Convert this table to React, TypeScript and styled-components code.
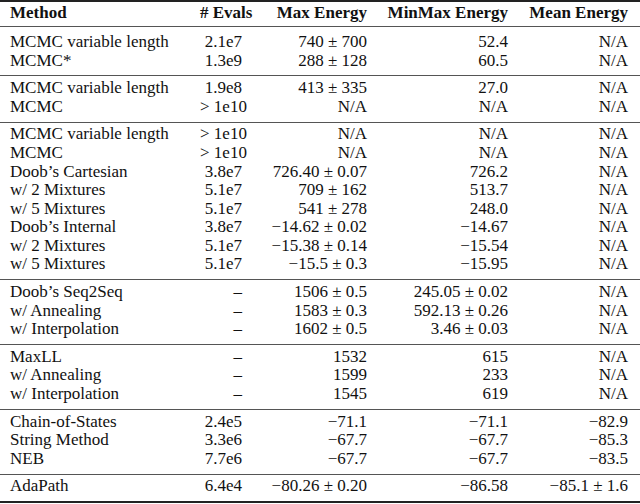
import styled, { createGlobalStyle } from 'styled-components';

const GlobalStyle = createGlobalStyle`
	html, body {
		margin: 0;
		padding: 0;
		background: #ffffff;
	}
`;

// table data, grouped by the rules between them
type Row = [string, string, string, string, string];

const groups: Row[][] = [
	[
		['MCMC variable length', '2.1e7', '740 ± 700', '52.4', 'N/A'],
		['MCMC*', '1.3e9', '288 ± 128', '60.5', 'N/A'],
	],
	[
		['MCMC variable length', '1.9e8', '413 ± 335', '27.0', 'N/A'],
		['MCMC', '> 1e10', 'N/A', 'N/A', 'N/A'],
	],
	[
		['MCMC variable length', '> 1e10', 'N/A', 'N/A', 'N/A'],
		['MCMC', '> 1e10', 'N/A', 'N/A', 'N/A'],
		['Doob’s Cartesian', '3.8e7', '726.40 ± 0.07', '726.2', 'N/A'],
		['w/ 2 Mixtures', '5.1e7', '709 ± 162', '513.7', 'N/A'],
		['w/ 5 Mixtures', '5.1e7', '541 ± 278', '248.0', 'N/A'],
		['Doob’s Internal', '3.8e7', '−14.62 ± 0.02', '−14.67', 'N/A'],
		['w/ 2 Mixtures', '5.1e7', '−15.38 ± 0.14', '−15.54', 'N/A'],
		['w/ 5 Mixtures', '5.1e7', '−15.5 ± 0.3', '−15.95', 'N/A'],
	],
	[
		['Doob’s Seq2Seq', '–', '1506 ± 0.5', '245.05 ± 0.02', 'N/A'],
		['w/ Annealing', '–', '1583 ± 0.3', '592.13 ± 0.26', 'N/A'],
		['w/ Interpolation', '–', '1602 ± 0.5', '3.46 ± 0.03', 'N/A'],
	],
	[
		['MaxLL', '–', '1532', '615', 'N/A'],
		['w/ Annealing', '–', '1599', '233', 'N/A'],
		['w/ Interpolation', '–', '1545', '619', 'N/A'],
	],
	[
		['Chain-of-States', '2.4e5', '−71.1', '−71.1', '−82.9'],
		['String Method', '3.3e6', '−67.7', '−67.7', '−85.3'],
		['NEB', '7.7e6', '−67.7', '−67.7', '−83.5'],
	],
	[['AdaPath', '6.4e4', '−80.26 ± 0.20', '−86.58', '−85.1 ± 1.6']],
];

const headers: Row = ['Method', '# Evals', 'Max Energy', 'MinMax Energy', 'Mean Energy'];

// styled components

const StyledTable = styled.div`
	width: 640px;
	font-family: 'Liberation Serif', 'Times New Roman', serif;
	font-size: 17px;
	color: #111;
	border-top: 2px solid #222;
	border-bottom: 2px solid #222;
`;

const StyledHead = styled.div`
	padding: 2px 0 3.4px;
	border-bottom: 1px solid #555;
	font-weight: bold;
`;

const StyledGroup = styled.div<{ $first?: boolean; $last?: boolean }>`
	padding-top: ${(p) => (p.$first ? '6px' : '2.7px')};
	padding-bottom: 5.3px;
	border-bottom: ${(p) => (p.$last ? 'none' : '1px solid #555')};
`;

const StyledRow = styled.div`
	display: grid;
	grid-template-columns: 190px 42px 125px 141px 120px;
	padding-left: 10px;
	line-height: 18.6px;
	white-space: nowrap;
`;

const StyledCell = styled.div<{ $left?: boolean }>`
	text-align: ${(p) => (p.$left ? 'left' : 'right')};
`;

function TableRow(props: { row: Row }) {
	return (
		<StyledRow>
			{props.row.map((cell, index) => (
				<StyledCell key={index} $left={index === 0}>
					{cell}
				</StyledCell>
			))}
		</StyledRow>
	);
}

export default function App() {
	return (
		<>
			<GlobalStyle />
			<StyledTable>
				<StyledHead>
					<TableRow row={headers} />
				</StyledHead>
				{groups.map((group, gi) => (
					<StyledGroup key={gi} $first={gi === 0} $last={gi === groups.length - 1}>
						{group.map((row, ri) => (
							<TableRow key={ri} row={row} />
						))}
					</StyledGroup>
				))}
			</StyledTable>
		</>
	);
}
